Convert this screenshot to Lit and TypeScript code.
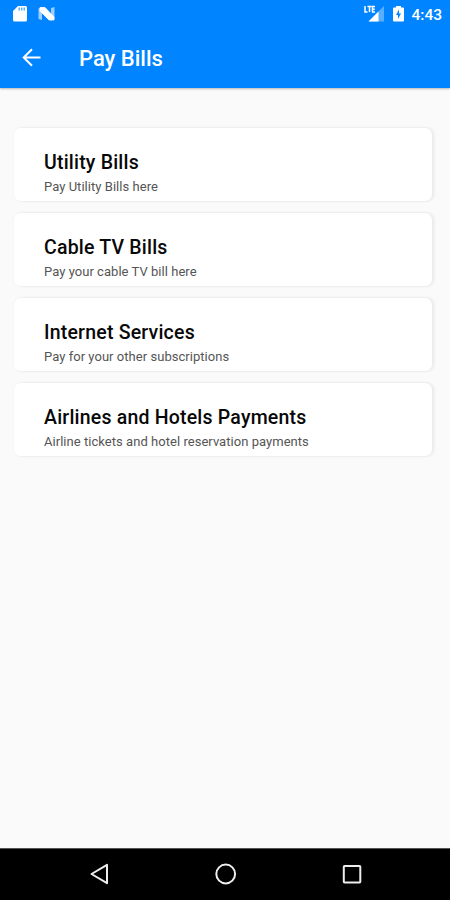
import { LitElement, html, css } from "lit";
import { customElement, property } from "lit/decorators.js";

@customElement("bill-card")
class BillCard extends LitElement {
  @property() heading = "";
  @property() detail = "";

  static styles = css`
    :host {
      display: block;
      box-sizing: border-box;
      height: 73px;
      padding: 23px 30px 0;
      border-radius: 7px;
      background: #fff;
      box-shadow: 2px 0 2px 1px rgba(0, 0, 0, 0.045), 0 0 3px 1px rgba(0, 0, 0, 0.02);
    }
    .heading {
      font-size: 19.5px;
      line-height: 24px;
      font-weight: 500;
      letter-spacing: 0.2px;
      color: #080808;
      white-space: nowrap;
    }
    .detail {
      margin-top: 4px;
      font-size: 13px;
      line-height: 16px;
      letter-spacing: 0.04px;
      color: #555;
      white-space: nowrap;
    }
  `;

  render() {
    return html`
      <div class="heading"><span>${this.heading}</span></div>
      <div class="detail"><span>${this.detail}</span></div>
    `;
  }
}

@customElement("app-root")
class AppRoot extends LitElement {
  private bills = [
    ["Utility Bills", "Pay Utility Bills here"],
    ["Cable TV Bills", "Pay your cable TV bill here"],
    ["Internet Services", "Pay for your other subscriptions"],
    ["Airlines and Hotels Payments", "Airline tickets and hotel reservation payments"],
  ];

  static styles = css`
    :host {
      display: flex;
      flex-direction: column;
      height: 900px;
      background: #fafafa;
      font-family: Roboto, sans-serif;
      overflow: hidden;
    }
    svg {
      display: block;
    }
    .top {
      height: 88px;
      flex: none;
      background: #0084ff;
      color: #fff;
      box-shadow: 0 1px 2px rgba(0, 0, 0, 0.28);
    }
    .status {
      display: flex;
      align-items: center;
      height: 28px;
      padding: 0 8px 0 13px;
    }
    .news {
      margin-left: 10px;
    }
    .signal {
      margin-left: auto;
    }
    .battery {
      margin-left: 9px;
    }
    .clock {
      margin-left: 7px;
      padding-top: 1px;
      font-size: 15.5px;
      font-weight: 500;
      line-height: 28px;
    }
    .bar {
      display: flex;
      align-items: center;
      height: 60px;
      padding-left: 22px;
    }
    .title {
      margin-left: 38px;
      padding-top: 2px;
      font-size: 22px;
      line-height: 30px;
      font-weight: 500;
    }
    .list {
      flex: 1;
      display: flex;
      flex-direction: column;
      gap: 12px;
      padding: 40px 18px 0 14px;
    }
    .nav {
      display: flex;
      align-items: center;
      justify-content: space-between;
      height: 52px;
      box-sizing: border-box;
      padding: 0 88px 1px 89px;
      border-top: 1px solid #555;
      background: #000;
    }
  `;

  render() {
    return html`
      <header class="top">
        <div class="status">
          <svg width="14" height="28" viewBox="0 0 14 28">
            <path d="M5 6h7.5Q14 6 14 7.5V20Q14 21.500 12.500 21.500H1.500Q0 21.500 0 20V11z" fill="#fff" />
            <path d="M5.500 7.500h1.500v3H5.500zM8 7.500h1.500v3H8zM10.500 7.500h1.500v3h-1.500z" fill="#0084ff" opacity=".65" />
          </svg>
          <svg class="news" width="19" height="28" viewBox="0 0 19 28">
            <path d="M1.500 8.500L5 7v13l-3.500-1zM14 8l3.500-1v12L14 20.500z" fill="#fff" opacity=".6" />
            <path d="M3 7.500H8L17 17V20H12L3 11z" fill="#fff" stroke="#fff" stroke-width=".8" stroke-linejoin="round" />
          </svg>
          <svg class="signal" width="20" height="28" viewBox="0 0 20 28">
            <path d="M20 6v15.500H4.500z" fill="#fff" opacity=".35" />
            <path d="M14.500 11.500v10H4.500z" fill="#fff" />
            <path d="M1 6v6h2.500M3.500 6.500h4M5.500 6.500V12M11 6.500H8.500V12H11M8.500 9.200H10.800" fill="none" stroke="#fff" stroke-width="1.500" />
          </svg>
          <svg class="battery" width="11" height="28" viewBox="0 0 11 28">
            <path d="M3 6h5v1.500h2Q11 7.500 11 8.500v12q0 1-1 1H1q-1 0-1-1v-12Q0 7.500 1 7.500h2z" fill="#fff" />
            <path d="M6 9.500L3 15H5v4L8 13.500H6z" fill="#0084ff" />
          </svg>
          <span class="clock">4:43</span>
        </div>
        <div class="bar">
          <svg width="19" height="60" viewBox="0 0 19 60">
            <path d="M18.500 29.500H2M10 21.200L1.700 29.500L10 37.800" fill="none" stroke="#fff" stroke-width="2" />
          </svg>
          <span class="title">Pay Bills</span>
        </div>
      </header>
      <main class="list">
        ${this.bills.map(([h, d]) => html`<bill-card .heading=${h} .detail=${d}></bill-card>`)}
      </main>
      <nav class="nav">
        <svg width="20" height="22" viewBox="0 0 20 22">
          <path d="M18 1.800V20.200L2.500 11z" fill="none" stroke="#eee" stroke-width="2" stroke-linejoin="round" />
        </svg>
        <svg width="22" height="22" viewBox="0 0 22 22">
          <circle cx="10.700" cy="11" r="9.400" fill="none" stroke="#eee" stroke-width="2" />
        </svg>
        <svg width="20" height="22" viewBox="0 0 20 22">
          <rect x="1.800" y="3" width="16.500" height="16.500" rx=".8" fill="none" stroke="#eee" stroke-width="2" />
        </svg>
      </nav>
    `;
  }
}
